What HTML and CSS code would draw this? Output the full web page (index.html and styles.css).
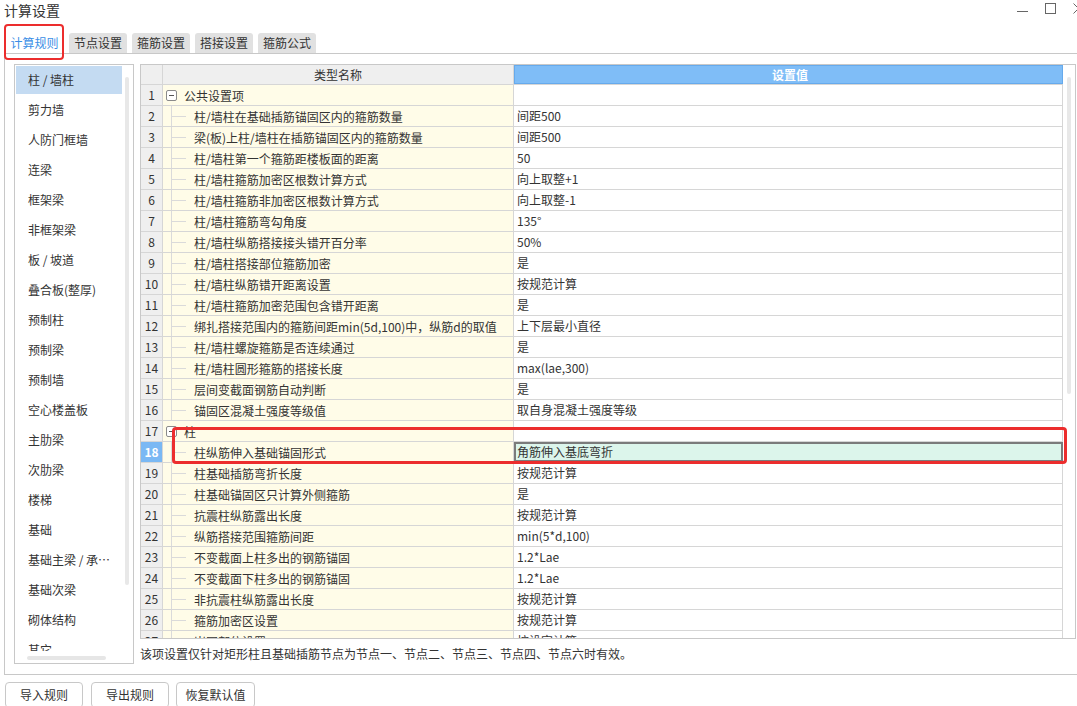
FILE: index.html
```html
<!DOCTYPE html>
<html lang="zh-CN">
<head>
<meta charset="utf-8">
<title>计算设置</title>
<link rel="stylesheet" href="styles.css">
</head>
<body>
<div class="titlebar">
  <span class="title">计算设置</span>
  <div class="winctl">
    <svg viewBox="0 0 11 16"><line x1="0" y1="11.5" x2="11" y2="11.5" stroke="#666" stroke-width="1"/></svg>
    <svg viewBox="0 0 11 16"><rect x="0.5" y="3.5" width="10" height="10" fill="none" stroke="#666" stroke-width="1"/></svg>
    <svg viewBox="0 0 11 16"><path d="M0.5 3.5 L10.5 13.5 M10.5 3.5 L0.5 13.5" stroke="#666" stroke-width="1"/></svg>
  </div>
</div>
<div class="tabs">
  <div class="tab active">计算规则</div>
  <div class="tab">节点设置</div>
  <div class="tab">箍筋设置</div>
  <div class="tab">搭接设置</div>
  <div class="tab">箍筋公式</div>
</div>
<div class="panel">
  <div class="side">
    <div class="side-view">
      <div class="side-list">
        <div class="item sel">柱 / 墙柱</div>
        <div class="item">剪力墙</div>
        <div class="item">人防门框墙</div>
        <div class="item">连梁</div>
        <div class="item">框架梁</div>
        <div class="item">非框架梁</div>
        <div class="item">板 / 坡道</div>
        <div class="item">叠合板(整厚)</div>
        <div class="item">预制柱</div>
        <div class="item">预制梁</div>
        <div class="item">预制墙</div>
        <div class="item">空心楼盖板</div>
        <div class="item">主肋梁</div>
        <div class="item">次肋梁</div>
        <div class="item">楼梯</div>
        <div class="item">基础</div>
        <div class="item">基础主梁 / 承台梁</div>
        <div class="item">基础次梁</div>
        <div class="item">砌体结构</div>
        <div class="item">其它</div>
      </div>
      <div class="vtrack"><div class="vthumb"></div></div>
    </div>
    <div class="hscroll"><div class="hthumb"></div></div>
  </div>
  <div class="main">
    <div class="gridbox">
      <div class="grid">
        <div class="row head"><div class="c-num"></div><div class="c-name">类型名称</div><div class="c-val">设置值</div></div>
        <div class="row grp"><div class="c-num">1</div><div class="c-name"><span class="box"></span><span class="gt">公共设置项</span></div><div class="c-val"></div></div>
        <div class="row"><div class="c-num">2</div><div class="c-name"><span class="tw"></span><span class="t">柱/墙柱在基础插筋锚固区内的箍筋数量</span></div><div class="c-val">间距500</div></div>
        <div class="row"><div class="c-num">3</div><div class="c-name"><span class="tw"></span><span class="t">梁(板)上柱/墙柱在插筋锚固区内的箍筋数量</span></div><div class="c-val">间距500</div></div>
        <div class="row"><div class="c-num">4</div><div class="c-name"><span class="tw"></span><span class="t">柱/墙柱第一个箍筋距楼板面的距离</span></div><div class="c-val">50</div></div>
        <div class="row"><div class="c-num">5</div><div class="c-name"><span class="tw"></span><span class="t">柱/墙柱箍筋加密区根数计算方式</span></div><div class="c-val">向上取整+1</div></div>
        <div class="row"><div class="c-num">6</div><div class="c-name"><span class="tw"></span><span class="t">柱/墙柱箍筋非加密区根数计算方式</span></div><div class="c-val">向上取整-1</div></div>
        <div class="row"><div class="c-num">7</div><div class="c-name"><span class="tw"></span><span class="t">柱/墙柱箍筋弯勾角度</span></div><div class="c-val">135°</div></div>
        <div class="row"><div class="c-num">8</div><div class="c-name"><span class="tw"></span><span class="t">柱/墙柱纵筋搭接接头错开百分率</span></div><div class="c-val">50%</div></div>
        <div class="row"><div class="c-num">9</div><div class="c-name"><span class="tw"></span><span class="t">柱/墙柱搭接部位箍筋加密</span></div><div class="c-val">是</div></div>
        <div class="row"><div class="c-num">10</div><div class="c-name"><span class="tw"></span><span class="t">柱/墙柱纵筋错开距离设置</span></div><div class="c-val">按规范计算</div></div>
        <div class="row"><div class="c-num">11</div><div class="c-name"><span class="tw"></span><span class="t">柱/墙柱箍筋加密范围包含错开距离</span></div><div class="c-val">是</div></div>
        <div class="row"><div class="c-num">12</div><div class="c-name"><span class="tw"></span><span class="t">绑扎搭接范围内的箍筋间距min(5d,100)中，纵筋d的取值</span></div><div class="c-val">上下层最小直径</div></div>
        <div class="row"><div class="c-num">13</div><div class="c-name"><span class="tw"></span><span class="t">柱/墙柱螺旋箍筋是否连续通过</span></div><div class="c-val">是</div></div>
        <div class="row"><div class="c-num">14</div><div class="c-name"><span class="tw"></span><span class="t">柱/墙柱圆形箍筋的搭接长度</span></div><div class="c-val">max(lae,300)</div></div>
        <div class="row"><div class="c-num">15</div><div class="c-name"><span class="tw"></span><span class="t">层间变截面钢筋自动判断</span></div><div class="c-val">是</div></div>
        <div class="row"><div class="c-num">16</div><div class="c-name"><span class="tw"></span><span class="t">锚固区混凝土强度等级值</span></div><div class="c-val">取自身混凝土强度等级</div></div>
        <div class="row grp"><div class="c-num">17</div><div class="c-name"><span class="box"></span><span class="gt">柱</span></div><div class="c-val"></div></div>
        <div class="row sel"><div class="c-num">18</div><div class="c-name"><span class="tw"></span><span class="t">柱纵筋伸入基础锚固形式</span></div><div class="c-val edit">角筋伸入基底弯折</div></div>
        <div class="row"><div class="c-num">19</div><div class="c-name"><span class="tw"></span><span class="t">柱基础插筋弯折长度</span></div><div class="c-val">按规范计算</div></div>
        <div class="row"><div class="c-num">20</div><div class="c-name"><span class="tw"></span><span class="t">柱基础锚固区只计算外侧箍筋</span></div><div class="c-val">是</div></div>
        <div class="row"><div class="c-num">21</div><div class="c-name"><span class="tw"></span><span class="t">抗震柱纵筋露出长度</span></div><div class="c-val">按规范计算</div></div>
        <div class="row"><div class="c-num">22</div><div class="c-name"><span class="tw"></span><span class="t">纵筋搭接范围箍筋间距</span></div><div class="c-val">min(5*d,100)</div></div>
        <div class="row"><div class="c-num">23</div><div class="c-name"><span class="tw"></span><span class="t">不变截面上柱多出的钢筋锚固</span></div><div class="c-val">1.2*Lae</div></div>
        <div class="row"><div class="c-num">24</div><div class="c-name"><span class="tw"></span><span class="t">不变截面下柱多出的钢筋锚固</span></div><div class="c-val">1.2*Lae</div></div>
        <div class="row"><div class="c-num">25</div><div class="c-name"><span class="tw"></span><span class="t">非抗震柱纵筋露出长度</span></div><div class="c-val">按规范计算</div></div>
        <div class="row"><div class="c-num">26</div><div class="c-name"><span class="tw"></span><span class="t">箍筋加密区设置</span></div><div class="c-val">按规范计算</div></div>
        <div class="row"><div class="c-num">27</div><div class="c-name"><span class="tw"></span><span class="t">嵌固部位设置</span></div><div class="c-val">按设定计算</div></div>
      </div>
      <div class="gtrack"><div class="gthumb"></div></div>
    </div>
    <div class="note">该项设置仅针对矩形柱且基础插筋节点为节点一、节点二、节点三、节点四、节点六时有效。</div>
  </div>
</div>
<div class="buttons">
  <div class="btn">导入规则</div>
  <div class="btn">导出规则</div>
  <div class="btn wide">恢复默认值</div>
</div>
<div class="hl-tab"></div>
<div class="hl-row"></div>
</body>
</html>
```

FILE: styles.css
```css
* { box-sizing: border-box; }
html, body { margin: 0; padding: 0; }
body {
  width: 1077px;
  height: 706px;
  overflow: hidden;
  position: relative;
  background: #fff;
  font-family: "Noto Sans CJK SC", "Microsoft YaHei", sans-serif;
  font-size: 12px;
  color: #333;
}

.titlebar {
  height: 24px;
  display: flex;
  align-items: flex-start;
  padding-left: 4px;
  overflow: hidden;
}
.title { font-size: 14px; line-height: 20px; color: #333; }
.winctl { margin-left: auto; margin-right: -7px; display: flex; gap: 17px; }
.winctl svg { display: block; width: 11px; height: 16px; }

.tabs {
  height: 29px;
  display: flex;
  align-items: flex-end;
  padding-left: 5px;
  gap: 5px;
}
.tab {
  width: 58px;
  height: 20px;
  line-height: 20px;
  text-align: center;
  background: #e1e1e1;
  border-radius: 3px 3px 0 0;
  color: #333;
  white-space: nowrap;
}
.tab.active { width: 59px; background: #fff; color: #3a8ee6; }

.panel {
  margin-left: 4px;
  height: 622px;
  border: 1px solid #c8c8c8;
  border-right: none;
  padding: 10px 0 10px 9px;
  display: flex;
  gap: 6px;
}

.side {
  width: 120px;
  height: 600px;
  border: 1px solid #c8c8c8;
  display: flex;
  flex-direction: column;
}
.side-view { height: 586px; display: flex; overflow: hidden; }
.side-list { width: 107px; padding-top: 1px; }
.item {
  width: 106px;
  height: 28px;
  line-height: 28px;
  margin: 0 0 2px 1px;
  padding: 0 8px 0 12px;
  white-space: nowrap;
  overflow: hidden;
  text-overflow: ellipsis;
  color: #333;
}
.item.sel { background: #c4dbf2; }
.vtrack { width: 11px; }
.vthumb {
  margin: 12px 0 0 3px;
  width: 4px;
  height: 508px;
  border-radius: 2px;
  background: #e8e8e8;
}
.hscroll { height: 12px; }
.hthumb {
  margin: 5px 0 0 12px;
  width: 79px;
  height: 4px;
  border-radius: 2px;
  background: #e6e6e6;
}

.main { width: 936px; display: flex; flex-direction: column; }
.gridbox {
  height: 578px;
  border: 1px solid #c8c8c8;
  display: flex;
  overflow: hidden;
}
.grid { width: 922px; overflow: hidden; }
.gtrack { width: 12px; }
.gthumb {
  margin: 12px 0 0 4px;
  width: 4px;
  height: 317px;
  border-radius: 2px;
  background: #e8e8e8;
}

.row {
  display: flex;
  height: 21px;
  border-bottom: 1px solid #d6d6d6;
}
.row.head { height: 20px; }
.c-num {
  width: 22px;
  flex: none;
  border-right: 1px solid #d6d6d6;
  background: #efefef;
  text-align: center;
  line-height: 20px;
  color: #333;
}
.c-name {
  width: 351px;
  flex: none;
  border-right: 1px solid #d6d6d6;
  background: #fffce8;
  display: flex;
  align-items: center;
  white-space: nowrap;
  overflow: hidden;
}
.c-val {
  width: 549px;
  flex: none;
  border-right: 1px solid #d6d6d6;
  padding-left: 3px;
  line-height: 20px;
  background: #fff;
  white-space: nowrap;
}
.head .c-num { line-height: 19px; }
.head .c-name { background: #efefef; justify-content: center; }
.head .c-val {
  background: #7fbdf7;
  border: 1px solid #66aaec;
  color: #fff;
  font-weight: bold;
  text-align: center;
  line-height: 18px;
}

.tw {
  align-self: stretch;
  width: 16px;
  margin-left: 8px;
  border-left: 1px solid #dadada;
  display: flex;
  align-items: center;
}
.tw::after {
  content: "";
  width: 14px;
  height: 1px;
  background: #dadada;
}
.t { margin-left: 7px; }
.box {
  width: 11px;
  height: 11px;
  margin-left: 3px;
  border: 1px solid #8a8a8a;
  border-radius: 2px;
  display: flex;
  align-items: center;
  justify-content: center;
  background: #fff;
}
.box::after {
  content: "";
  width: 5px;
  height: 1px;
  background: #555;
}
.gt { margin-left: 7px; }

.sel .c-num { background: #7ab8f4; color: #fff; font-weight: bold; }
.c-val.edit {
  background: #dcf5eb;
  border: 2px solid #7b7b7b;
  line-height: 16px;
  padding-left: 1px;
}

.note { margin-top: 5px; line-height: 20px; padding-left: 0; color: #333; white-space: nowrap; }

.buttons {
  margin-top: 7px;
  padding-left: 5px;
  display: flex;
  gap: 8px;
}
.btn {
  width: 78px;
  height: 26px;
  border: 1px solid #c8c8c8;
  border-radius: 4px;
  text-align: center;
  line-height: 24px;
  color: #333;
  background: #fff;
}
.btn.wide { width: 79px; margin-left: -1px; }

.hl-tab {
  position: absolute;
  left: 4px;
  top: 24px;
  width: 60px;
  height: 36px;
  border: 2px solid #ec2d2d;
  border-radius: 4px;
}
.hl-row {
  position: absolute;
  left: 172px;
  top: 427px;
  width: 895px;
  height: 37px;
  border: 3px solid #ec2d2d;
  border-radius: 4px;
}
```
